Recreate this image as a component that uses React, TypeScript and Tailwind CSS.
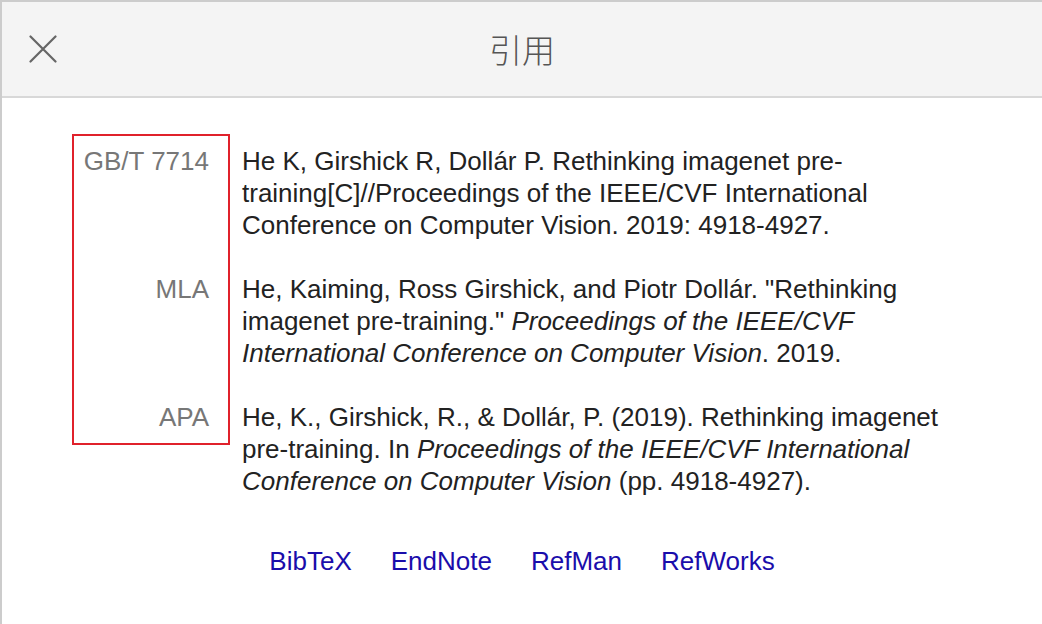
import React from 'react';

const citations = [
  {
    label: 'GB/T 7714',
    text: <>He K, Girshick R, Dollár P. Rethinking imagenet pre-training[C]//Proceedings of the IEEE/CVF International Conference on Computer Vision. 2019: 4918-4927.</>,
  },
  {
    label: 'MLA',
    text: (
      <>
        He, Kaiming, Ross Girshick, and Piotr Dollár. "Rethinking imagenet pre-training." <i>Proceedings of the IEEE/CVF International Conference on Computer Vision</i>. 2019.
      </>
    ),
  },
  {
    label: 'APA',
    text: (
      <>
        He, K., Girshick, R., &amp; Dollár, P. (2019). Rethinking imagenet pre-training. In <i>Proceedings of the IEEE/CVF International Conference on Computer Vision</i> (pp. 4918-4927).
      </>
    ),
  },
];

const links = ['BibTeX', 'EndNote', 'RefMan', 'RefWorks'];

const App: React.FC = () => {
  return (
    <div className="h-[624px] w-[1042px] overflow-hidden border-l-2 border-t-2 border-[#cccccc] bg-white [font-family:'Liberation_Sans',Arial,sans-serif]">
      {/* header */}
      <div className="grid h-[96px] grid-cols-[1fr_auto_1fr] items-center border-b-2 border-[#d8d8d8] bg-[#f4f4f4]">
        <button className="ml-[27px] flex h-[28px] w-[28px] items-center justify-center text-[#666]">
          <svg width="28" height="28" viewBox="0 0 28 28" fill="none" stroke="currentColor" strokeWidth="2.2" strokeLinecap="round">
            <path d="M1.5 1.5 L26.5 26.5 M26.5 1.5 L1.5 26.5" />
          </svg>
        </button>
        <h1 className="[font-family:'Noto_Sans_CJK_SC',sans-serif] text-[33px] font-light leading-none text-[#555]">引用</h1>
        <div />
      </div>

      {/* citations */}
      <div className="pl-[70px] pt-[47px]">
        <div className="relative grid grid-cols-[158px_720px] gap-x-[12px] gap-y-[32px] text-[26px] leading-[32px]">
          <div className="pointer-events-none absolute left-0 top-[-11px] h-[311px] w-[158px] border-2 border-[#e0212b]" />
          {citations.map((c) => (
            <React.Fragment key={c.label}>
              <div className="pr-[21px] text-right text-[#777]">{c.label}</div>
              <div className="text-[#222]">{c.text}</div>
            </React.Fragment>
          ))}
        </div>
      </div>

      {/* export links */}
      <div className="mt-[48px] flex justify-center gap-x-[39px] text-[26px] leading-[32px]">
        {links.map((l) => (
          <a key={l} href="#" className="text-[#1a0dab]">
            {l}
          </a>
        ))}
      </div>
    </div>
  );
};

export default App;
